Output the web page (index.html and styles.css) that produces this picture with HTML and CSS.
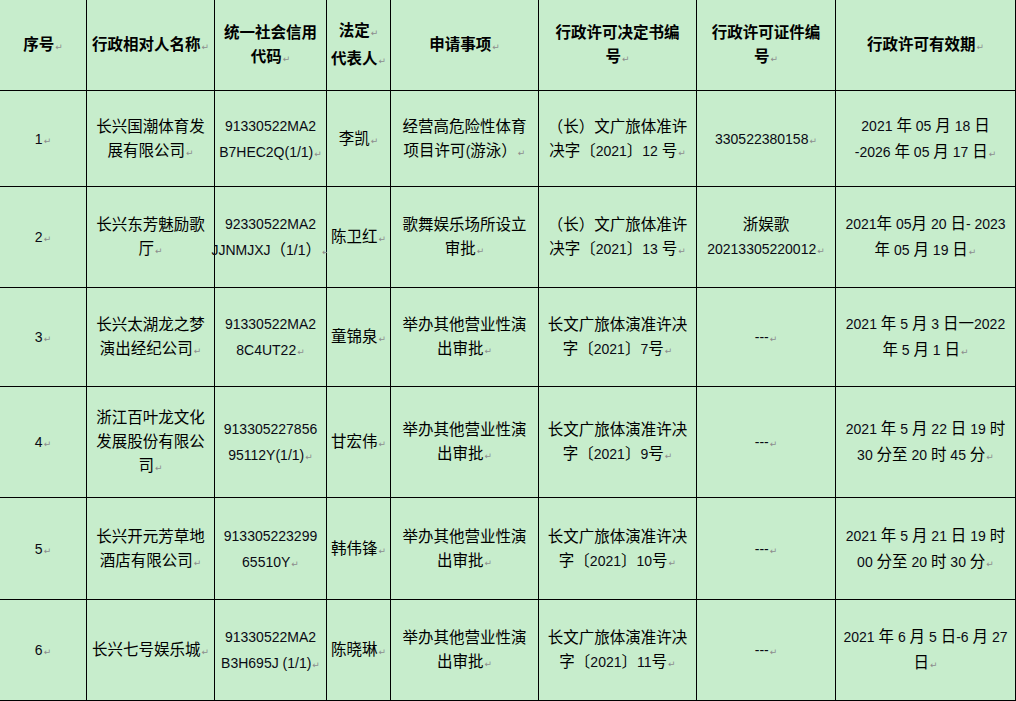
FILE: index.html
```html
<!DOCTYPE html>
<html lang="zh-CN">
<head>
<meta charset="utf-8">
<title>行政许可公示</title>
<link rel="stylesheet" href="styles.css">
</head>
<body>
<div class="grid">
  <div class="c h"><div class="t">序号<span class="pm">↵</span></div></div>
  <div class="c h"><div class="t">行政相对人名称<span class="pm">↵</span></div></div>
  <div class="c h"><div class="t">统一社会信用<br>代码<span class="pm">↵</span></div></div>
  <div class="c h"><div class="t">法定<span class="pm">↵</span><br>代表人<span class="pm">↵</span></div></div>
  <div class="c h"><div class="t">申请事项<span class="pm">↵</span></div></div>
  <div class="c h"><div class="t">行政许可决定书编<br>号<span class="pm">↵</span></div></div>
  <div class="c h"><div class="t">行政许可证件编<br>号<span class="pm">↵</span></div></div>
  <div class="c h"><div class="t">行政许可有效期<span class="pm">↵</span></div></div>

  <div class="c"><div class="t"><span class="n">1</span><span class="pm">↵</span></div></div>
  <div class="c"><div class="t">长兴国潮体育发<br>展有限公司<span class="pm">↵</span></div></div>
  <div class="c"><div class="t"><span class="n">91330522MA2<br>B7HEC2Q(1/1)</span><span class="pm">↵</span></div></div>
  <div class="c"><div class="t">李凯<span class="pm">↵</span></div></div>
  <div class="c"><div class="t">经营高危险性体育<br>项目许可<span class="n">(</span>游泳）<span class="pm">↵</span></div></div>
  <div class="c"><div class="t">（长）文广旅体准许<br>决字〔<span class="n">2021</span>〕<span class="n">12 </span>号<span class="pm">↵</span></div></div>
  <div class="c"><div class="t"><span class="n">330522380158</span><span class="pm">↵</span></div></div>
  <div class="c"><div class="t"><span class="n">2021 </span>年<span class="n"> 05 </span>月<span class="n"> 18 </span>日<br><span class="n">-2026 </span>年<span class="n"> 05 </span>月<span class="n"> 17 </span>日<span class="pm">↵</span></div></div>

  <div class="c"><div class="t"><span class="n">2</span><span class="pm">↵</span></div></div>
  <div class="c"><div class="t">长兴东芳魅励歌<br>厅<span class="pm">↵</span></div></div>
  <div class="c"><div class="t"><span class="n">92330522MA2<br>JJNMJXJ</span>（<span class="n">1/1</span>）<span class="pm">↵</span></div></div>
  <div class="c"><div class="t">陈卫红<span class="pm">↵</span></div></div>
  <div class="c"><div class="t">歌舞娱乐场所设立<br>审批<span class="pm">↵</span></div></div>
  <div class="c"><div class="t">（长）文广旅体准许<br>决字〔<span class="n">2021</span>〕<span class="n">13 </span>号<span class="pm">↵</span></div></div>
  <div class="c"><div class="t">浙娱歌<br><span class="n">20213305220012</span><span class="pm">↵</span></div></div>
  <div class="c"><div class="t"><span class="n">2021</span>年<span class="n"> 05</span>月<span class="n"> 20 </span>日<span class="n">- 2023</span><br>年<span class="n"> 05 </span>月<span class="n"> 19 </span>日<span class="pm">↵</span></div></div>

  <div class="c"><div class="t"><span class="n">3</span><span class="pm">↵</span></div></div>
  <div class="c"><div class="t">长兴太湖龙之梦<br>演出经纪公司<span class="pm">↵</span></div></div>
  <div class="c"><div class="t"><span class="n">91330522MA2<br>8C4UT22</span><span class="pm">↵</span></div></div>
  <div class="c"><div class="t">童锦泉<span class="pm">↵</span></div></div>
  <div class="c"><div class="t">举办其他营业性演<br>出审批<span class="pm">↵</span></div></div>
  <div class="c"><div class="t">长文广旅体演准许决<br>字〔<span class="n">2021</span>〕<span class="n">7</span>号<span class="pm">↵</span></div></div>
  <div class="c"><div class="t"><span class="n">---</span><span class="pm">↵</span></div></div>
  <div class="c"><div class="t"><span class="n">2021 </span>年<span class="n"> 5 </span>月<span class="n"> 3 </span>日一<span class="n">2022</span><br>年<span class="n"> 5 </span>月<span class="n"> 1 </span>日<span class="pm">↵</span></div></div>

  <div class="c"><div class="t"><span class="n">4</span><span class="pm">↵</span></div></div>
  <div class="c"><div class="t">浙江百叶龙文化<br>发展股份有限公<br>司<span class="pm">↵</span></div></div>
  <div class="c"><div class="t"><span class="n">913305227856<br>95112Y(1/1)</span><span class="pm">↵</span></div></div>
  <div class="c"><div class="t">甘宏伟<span class="pm">↵</span></div></div>
  <div class="c"><div class="t">举办其他营业性演<br>出审批<span class="pm">↵</span></div></div>
  <div class="c"><div class="t">长文广旅体演准许决<br>字〔<span class="n">2021</span>〕<span class="n">9</span>号<span class="pm">↵</span></div></div>
  <div class="c"><div class="t"><span class="n">---</span><span class="pm">↵</span></div></div>
  <div class="c"><div class="t"><span class="n">2021 </span>年<span class="n"> 5 </span>月<span class="n"> 22 </span>日<span class="n"> 19 </span>时<br><span class="n">30 </span>分至<span class="n"> 20 </span>时<span class="n"> 45 </span>分<span class="pm">↵</span></div></div>

  <div class="c"><div class="t"><span class="n">5</span><span class="pm">↵</span></div></div>
  <div class="c"><div class="t">长兴开元芳草地<br>酒店有限公司<span class="pm">↵</span></div></div>
  <div class="c"><div class="t"><span class="n">913305223299<br>65510Y</span><span class="pm">↵</span></div></div>
  <div class="c"><div class="t">韩伟锋<span class="pm">↵</span></div></div>
  <div class="c"><div class="t">举办其他营业性演<br>出审批<span class="pm">↵</span></div></div>
  <div class="c"><div class="t">长文广旅体演准许决<br>字〔<span class="n">2021</span>〕<span class="n">10</span>号<span class="pm">↵</span></div></div>
  <div class="c"><div class="t"><span class="n">---</span><span class="pm">↵</span></div></div>
  <div class="c"><div class="t"><span class="n">2021 </span>年<span class="n"> 5 </span>月<span class="n"> 21 </span>日<span class="n"> 19 </span>时<br><span class="n">00 </span>分至<span class="n"> 20 </span>时<span class="n"> 30 </span>分<span class="pm">↵</span></div></div>

  <div class="c"><div class="t"><span class="n">6</span><span class="pm">↵</span></div></div>
  <div class="c"><div class="t">长兴七号娱乐城<span class="pm">↵</span></div></div>
  <div class="c"><div class="t"><span class="n">91330522MA2<br>B3H695J (1/1)</span><span class="pm">↵</span></div></div>
  <div class="c"><div class="t">陈晓琳<span class="pm">↵</span></div></div>
  <div class="c"><div class="t">举办其他营业性演<br>出审批<span class="pm">↵</span></div></div>
  <div class="c"><div class="t">长文广旅体演准许决<br>字〔<span class="n">2021</span>〕<span class="n">11</span>号<span class="pm">↵</span></div></div>
  <div class="c"><div class="t"><span class="n">---</span><span class="pm">↵</span></div></div>
  <div class="c"><div class="t"><span class="n">2021 </span>年<span class="n"> 6 </span>月<span class="n"> 5 </span>日<span class="n">-6 </span>月<span class="n"> 27</span><br>日<span class="pm">↵</span></div></div>
</div>
</body>
</html>
```

FILE: styles.css
```css
html, body {
  margin: 0;
  padding: 0;
  background: #c7edcc;
  overflow: hidden;
}

.grid {
  display: grid;
  grid-template-columns: 86px 127px 111px 63px 147px 157px 138px 179px;
  grid-template-rows: 90px 95px 100px 98px 110px 101px 100px;
  gap: 1px;
  padding: 0 1px 1px 0;
  width: 1016px;
  height: 701px;
  box-sizing: border-box;
  background: #000;
  font-family: "Noto Sans CJK SC", "Noto Sans", sans-serif;
  font-size: 15.5px;
  line-height: 24px;
  color: #000;
}

.c {
  background: #c7edcc;
  display: flex;
  align-items: center;
  justify-content: center;
}

.t {
  text-align: center;
  white-space: nowrap;
}

.h {
  font-weight: bold;
}

.n {
  font-family: "Liberation Sans", "Noto Sans CJK SC", sans-serif;
  font-size: 14px;
  color: #0a0a14;
}

.pm {
  font-family: "DejaVu Sans", sans-serif;
  font-size: 9px;
  font-weight: normal;
  color: #8c8c8c;
  margin-left: 1px;
}
```
